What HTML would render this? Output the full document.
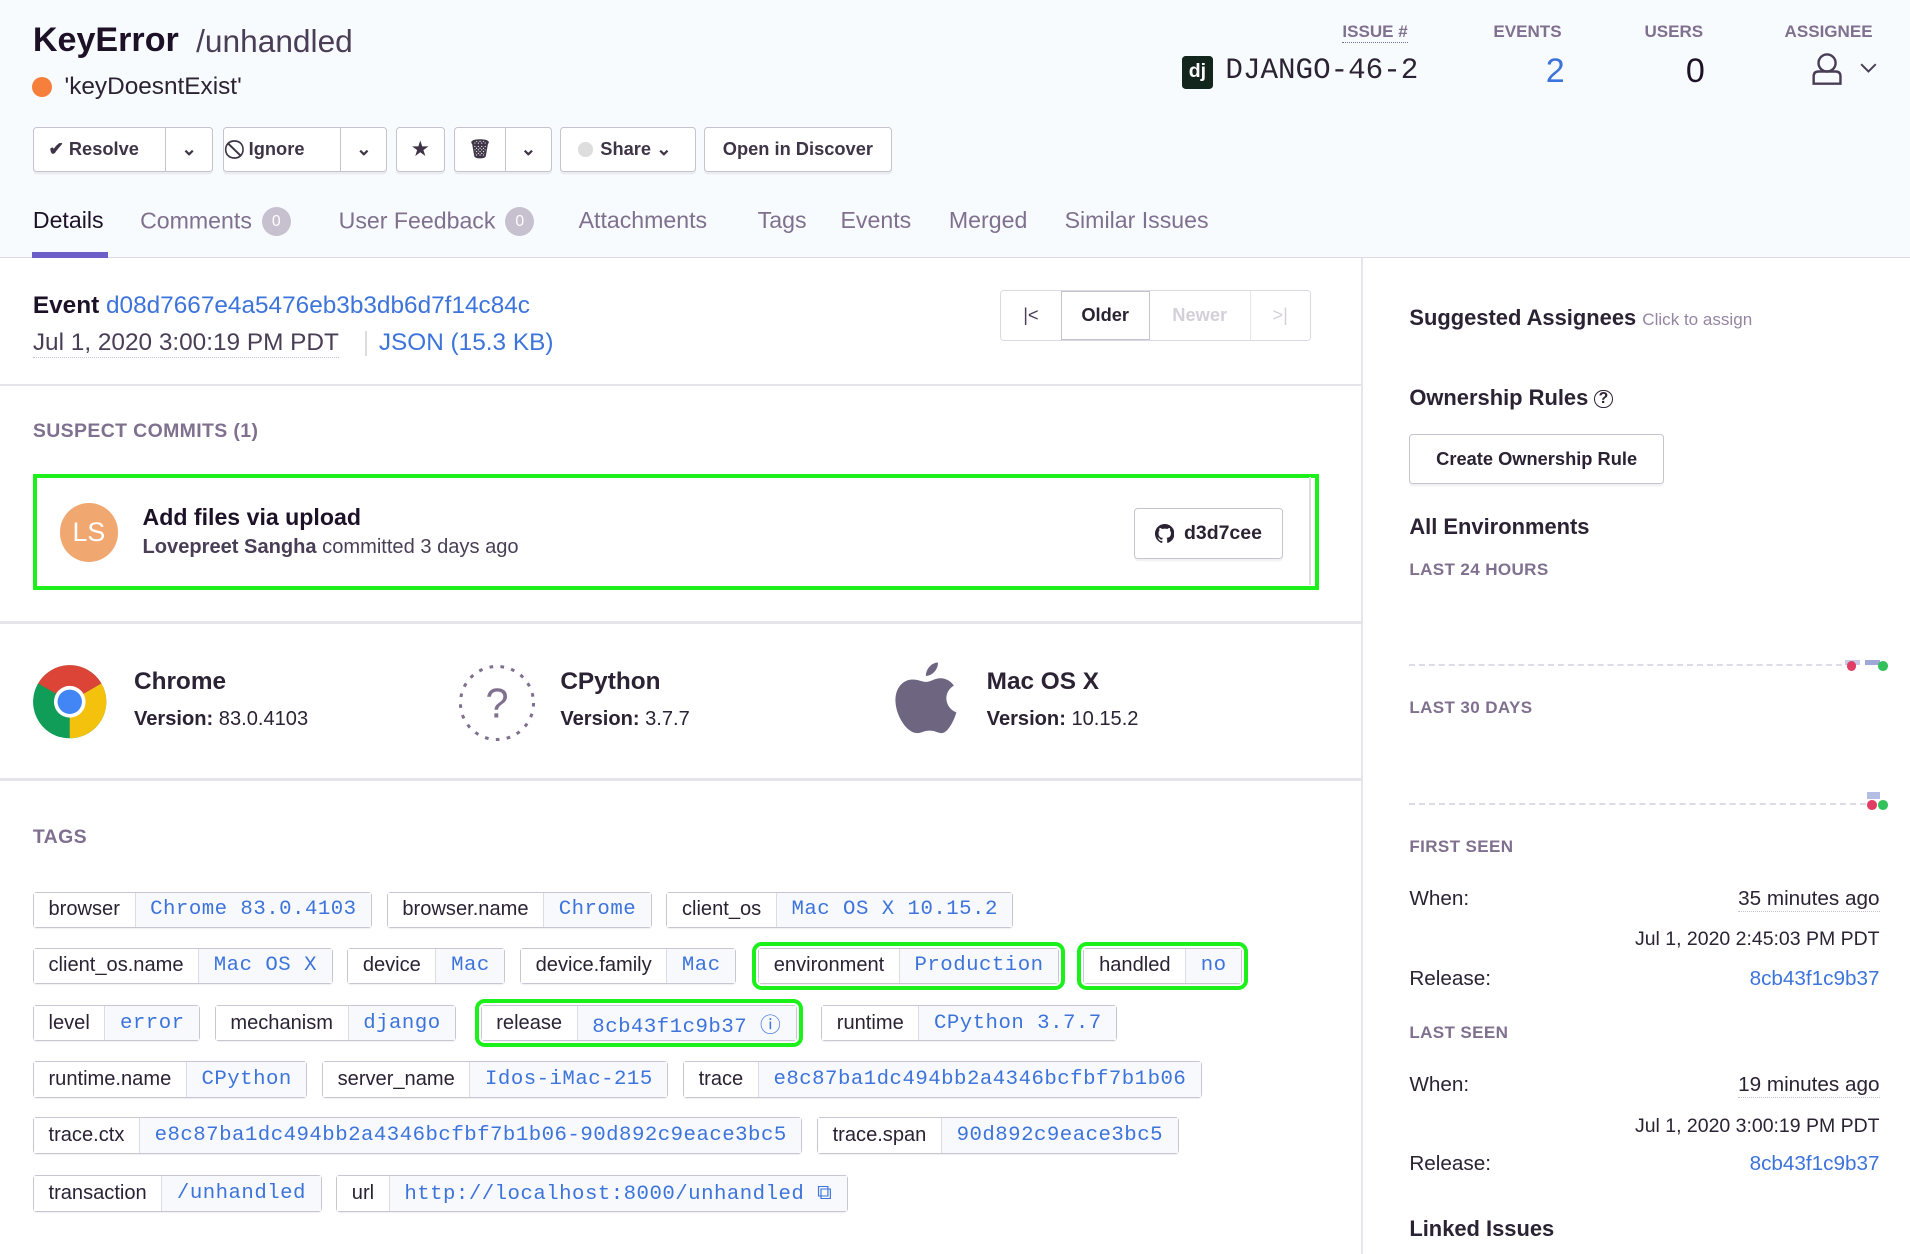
<!DOCTYPE html>
<html><head><meta charset="utf-8"><style>
*{box-sizing:border-box;margin:0;padding:0}
html,body{width:1910px;height:1254px;overflow:hidden;background:#fff}
#z{zoom:1.21811;width:1568px;height:1030px;position:relative;font-family:"Liberation Sans",sans-serif;color:#2b2233}
.a{position:absolute;white-space:nowrap}
.hdr{position:absolute;left:0;top:0;width:1568px;height:212px;background:#f8fbfd;border-bottom:1px solid #dcdbe3}
.btn{position:absolute;top:104px;height:37px;border:1px solid #c6c2cf;border-radius:3px;background:#fff;box-shadow:0 2px 0 rgba(0,0,0,.06);font-size:15px;font-weight:bold;color:#3e3446;display:flex;align-items:center}
.btn .s{border-left:1px solid #c6c2cf;height:100%;display:flex;align-items:center;justify-content:center}
.tab{position:absolute;top:170px;font-size:19px;color:#80708f}
.badge{display:inline-block;width:24px;height:24px;border-radius:12px;background:#c6c0cf;color:#fff;font-size:13px;text-align:center;line-height:24px;vertical-align:2px;margin-left:8px}
.lbl{position:absolute;font-size:14px;font-weight:bold;color:#80708f;letter-spacing:.3px}
.hr{position:absolute;left:0;width:1117px;height:2px;background:#e7e5ec}
.row{position:absolute;left:27px;display:flex;gap:0}
.tag{display:inline-flex;height:30px;border:1px solid #c9c5d2;border-radius:3px;box-shadow:0 1px 0 rgba(0,0,0,.05);font-size:16.5px;margin-right:12px;align-items:stretch}
.tag .k{padding:0 12px;display:flex;align-items:center;color:#2b2233;background:#fff}
.tag .v{padding:0 12px;display:flex;align-items:center;border-left:1px solid #dedbe4;background:#f7f9fc;color:#3d74db;font-family:"Liberation Mono",monospace;font-size:17px;letter-spacing:.4px}
.hl{outline:4px solid #1bf01b;outline-offset:2px}
.sb{position:absolute;left:1157px;font-size:17px;color:#2b2233}
.rt{position:absolute;right:25px;font-size:17px}
</style></head><body><div id="z">
<div class="hdr"></div>
<div class="a" style="left:27px;top:17px;font-size:28px;font-weight:bold;color:#1d1127">KeyError</div>
<div class="a" style="left:161px;top:19px;font-size:26px;color:#4a3e56">/unhandled</div>
<div class="a" style="left:26px;top:63px;width:17px;height:17px;border-radius:50%;background:#f67f3b"></div>
<div class="a" style="left:53px;top:60px;font-size:20px;color:#2b2233">'keyDoesntExist'</div>

<div class="btn" style="left:27px;width:148px"><div style="width:108px;padding-left:12px">✔ Resolve</div><div class="s" style="width:39px">&#8964;</div></div>
<div class="btn" style="left:183px;width:135px"><div style="width:96px;padding-left:12px">⃠&nbsp; Ignore</div><div class="s" style="width:38px">&#8964;</div></div>
<div class="btn" style="left:325px;width:40px;justify-content:center">★</div>
<div class="btn" style="left:373px;width:80px"><div style="width:41px;text-align:center">🗑</div><div class="s" style="width:38px">&#8964;</div></div>
<div class="btn" style="left:460px;width:111px;padding-left:14px"><span style="display:inline-block;width:12px;height:12px;border-radius:6px;background:#ddd;margin-right:6px"></span>Share &#8964;</div>
<div class="btn" style="left:578px;width:154px;justify-content:center">Open in Discover</div>

<div class="tab" style="left:27px;color:#1d1127">Details</div>
<div class="a" style="left:26px;top:207px;width:63px;height:5px;background:#6c5fc7"></div>
<div class="tab" style="left:115px">Comments<span class="badge">0</span></div>
<div class="tab" style="left:278px">User Feedback<span class="badge">0</span></div>
<div class="tab" style="left:475px">Attachments</div>
<div class="tab" style="left:622px">Tags</div>
<div class="tab" style="left:690px">Events</div>
<div class="tab" style="left:779px">Merged</div>
<div class="tab" style="left:874px">Similar Issues</div>

<div class="a" style="left:1102px;top:18px;font-size:14px;font-weight:bold;color:#80708f;border-bottom:1px dotted #80708f">ISSUE #</div>
<div class="a" style="left:970px;top:46px;width:26px;height:27px;border-radius:3px;color:#fff;font-weight:bold;font-size:16px;text-align:center;line-height:26px;background:#12261e">dj</div>
<div class="a" style="left:1006px;top:44px;font-size:24px;font-family:'Liberation Mono',monospace;color:#2b2233">DJANGO-46-2</div>
<div class="a" style="left:1226px;top:18px;font-size:14px;font-weight:bold;color:#80708f">EVENTS</div>
<div class="a" style="left:1269px;top:43px;font-size:28px;color:#3d74db">2</div>
<div class="a" style="left:1350px;top:18px;font-size:14px;font-weight:bold;color:#80708f">USERS</div>
<div class="a" style="left:1384px;top:43px;font-size:28px;color:#1d1127">0</div>
<div class="a" style="left:1465px;top:18px;font-size:14px;font-weight:bold;color:#80708f">ASSIGNEE</div>
<svg class="a" style="left:1486px;top:43px" width="60" height="28" viewBox="0 0 60 28"><circle cx="14" cy="9" r="7" fill="none" stroke="#4a3e56" stroke-width="2"/><path d="M3 26v-6q0-4 4-4h14q4 0 4 4v6z" fill="none" stroke="#4a3e56" stroke-width="2"/><path d="M42 10l6 6 6-6" fill="none" stroke="#4a3e56" stroke-width="1.6"/></svg>

<div class="a" style="left:1117px;top:212px;width:2px;height:818px;background:#e7e5ec"></div>
<div class="a" style="left:27px;top:240px;font-size:20px;font-weight:bold;color:#1d1127">Event <span style="font-weight:normal;color:#3d74db">d08d7667e4a5476eb3b3db6d7f14c84c</span></div>
<div class="a" style="left:27px;top:270px;font-size:20px;color:#4a3e56;border-bottom:1px dotted #c6c0cf">Jul 1, 2020 3:00:19 PM PDT</div>
<div class="a" style="left:300px;top:272px;width:1px;height:20px;background:#ddd"></div>
<div class="a" style="left:311px;top:270px;font-size:20px;color:#3d74db">JSON (15.3 KB)</div>
<div class="a" style="left:821px;top:238px;width:255px;height:42px;border:1px solid #dcd9e2;border-radius:3px;display:flex;font-size:15px;font-weight:bold">
<div style="width:49px;display:flex;align-items:center;justify-content:center;font-weight:normal;color:#4a3e56">|&lt;</div>
<div style="width:73px;border:1px solid #c6c2cf;display:flex;align-items:center;justify-content:center;color:#2b2233">Older</div>
<div style="width:83px;border-right:1px solid #e7e5ec;display:flex;align-items:center;justify-content:center;color:#d3d0da">Newer</div>
<div style="flex:1;display:flex;align-items:center;justify-content:center;color:#d3d0da;font-weight:normal">&gt;|</div></div>
<div class="hr" style="top:315px"></div>

<div class="lbl" style="left:27px;top:345px;font-size:16px">SUSPECT COMMITS (1)</div>
<div class="a" style="left:27px;top:389px;width:1056px;height:95px;border:4px solid #1bf01b"></div>
<div class="a" style="left:1075px;top:392px;width:1px;height:88px;background:#ddd"></div>
<div class="a" style="left:49px;top:413px;width:48px;height:48px;border-radius:50%;background:#f0a870;color:#fff;font-size:22px;text-align:center;line-height:48px">LS</div>
<div class="a" style="left:117px;top:414px;font-size:19px;font-weight:bold;color:#1d1127">Add files via upload</div>
<div class="a" style="left:117px;top:440px;font-size:16.5px;color:#4a3e56"><b>Lovepreet Sangha</b> committed 3 days ago</div>
<div class="a" style="left:931px;top:417px;width:122px;height:42px;border:1px solid #c6c2cf;border-radius:3px;box-shadow:0 2px 0 rgba(0,0,0,.05);display:flex;align-items:center;justify-content:center;font-size:16px;font-weight:bold;color:#2b2233">
<svg width="16" height="16" viewBox="0 0 16 16" style="margin-right:8px"><path fill="#2b2233" d="M8 0C3.6 0 0 3.6 0 8c0 3.5 2.3 6.5 5.5 7.6.4.1.5-.2.5-.4v-1.4c-2.200.5-2.700-1-2.700-1-.4-.9-.9-1.200-.9-1.200-.7-.5.1-.5.1-.5.8.1 1.200.8 1.200.8.7 1.200 1.900.9 2.300.7.1-.5.3-.9.5-1.100-1.800-.2-3.600-.9-3.600-4 0-.9.3-1.600.8-2.100-.1-.2-.4-1 .1-2.100 0 0 .7-.2 2.200.8.6-.2 1.300-.3 2-.3s1.400.1 2 .3c1.500-1 2.200-.8 2.200-.8.4 1.100.2 1.900.1 2.100.5.6.8 1.300.8 2.100 0 3.100-1.900 3.700-3.600 3.900.3.3.5.8.5 1.500v2.200c0 .2.1.5.6.4C13.700 14.500 16 11.500 16 8c0-4.400-3.600-8-8-8z"/></svg>d3d7cee</div>
<div class="hr" style="top:510px"></div>

<svg class="a" style="left:26px;top:545px" width="62" height="62" viewBox="0 0 62 62"><circle cx="31" cy="31" r="30" fill="#0f9d58"/><path d="M31 31L5 16A30 30 0 0 1 57 16Z" fill="#db4437"/><path d="M31 31L57 16A30 30 0 0 1 31 61Z" fill="#f4c20d"/><path d="M31 31 5 16A30 30 0 0 0 23 60Z" fill="#0f9d58"/><circle cx="31" cy="31" r="13" fill="#fff"/><circle cx="31" cy="31" r="10" fill="#4285f4"/></svg>
<div class="a" style="left:110px;top:548px;font-size:20px;font-weight:bold;color:#2b2233">Chrome</div>
<div class="a" style="left:110px;top:581px;font-size:16.5px;color:#2b2233"><b>Version:</b> 83.0.4103</div>
<svg class="a" style="left:376px;top:545px" width="64" height="64" viewBox="0 0 64 64"><circle cx="32" cy="32" r="30" fill="none" stroke="#80708f" stroke-width="2.5" stroke-dasharray="3 6"/><text x="32" y="44" text-anchor="middle" font-size="34" fill="#80708f" font-family="Liberation Sans">?</text></svg>
<div class="a" style="left:460px;top:548px;font-size:20px;font-weight:bold;color:#2b2233">CPython</div>
<div class="a" style="left:460px;top:581px;font-size:16.5px;color:#2b2233"><b>Version:</b> 3.7.7</div>
<svg class="a" style="left:733px;top:542px" width="54" height="66" viewBox="0 0 54 66"><path fill="#6e6580" d="M37 2c0 6-5 11-10 11 0-6 5-11 10-11zM27 18c4 0 7-3 12-3 5 0 9 3 11 6-9 5-8 18 2 22-2 7-7 17-12 17-4 0-5-2-10-2s-6 2-10 2C11 60 2 45 2 33 2 22 9 16 16 16c5 0 8 2 11 2z"/></svg>
<div class="a" style="left:810px;top:548px;font-size:20px;font-weight:bold;color:#2b2233">Mac OS X</div>
<div class="a" style="left:810px;top:581px;font-size:16.5px;color:#2b2233"><b>Version:</b> 10.15.2</div>
<div class="hr" style="top:639px"></div>

<div class="lbl" style="left:27px;top:678px;font-size:16px">TAGS</div>
<div class="row" style="top:732px"><span class="tag"><span class="k">browser</span><span class="v">Chrome 83.0.4103</span></span><span class="tag"><span class="k">browser.name</span><span class="v">Chrome</span></span><span class="tag"><span class="k">client_os</span><span class="v">Mac OS X 10.15.2</span></span></div>
<div class="row" style="top:778px"><span class="tag"><span class="k">client_os.name</span><span class="v">Mac OS X</span></span><span class="tag"><span class="k">device</span><span class="v">Mac</span></span><span class="tag" style="margin-right:18px"><span class="k">device.family</span><span class="v">Mac</span></span><span class="tag hl" style="margin-right:20px"><span class="k">environment</span><span class="v">Production</span></span><span class="tag hl"><span class="k">handled</span><span class="v">no</span></span></div>
<div class="row" style="top:825px"><span class="tag"><span class="k">level</span><span class="v">error</span></span><span class="tag" style="margin-right:20px"><span class="k">mechanism</span><span class="v">django</span></span><span class="tag hl" style="margin-right:20px"><span class="k">release</span><span class="v">8cb43f1c9b37 ⓘ</span></span><span class="tag"><span class="k">runtime</span><span class="v">CPython 3.7.7</span></span></div>
<div class="row" style="top:871px"><span class="tag"><span class="k">runtime.name</span><span class="v">CPython</span></span><span class="tag"><span class="k">server_name</span><span class="v">Idos-iMac-215</span></span><span class="tag"><span class="k">trace</span><span class="v">e8c87ba1dc494bb2a4346bcfbf7b1b06</span></span></div>
<div class="row" style="top:917px"><span class="tag"><span class="k">trace.ctx</span><span class="v">e8c87ba1dc494bb2a4346bcfbf7b1b06-90d892c9eace3bc5</span></span><span class="tag"><span class="k">trace.span</span><span class="v">90d892c9eace3bc5</span></span></div>
<div class="row" style="top:965px"><span class="tag"><span class="k">transaction</span><span class="v">/unhandled</span></span><span class="tag"><span class="k">url</span><span class="v">http://localhost:8000/unhandled ⧉</span></span></div>

<div class="sb" style="top:250px;font-weight:bold;font-size:18px">Suggested Assignees <span style="font-weight:normal;font-size:14px;color:#9585a3">Click to assign</span></div>
<div class="sb" style="top:316px;font-weight:bold;font-size:18px">Ownership Rules <span style="font-size:13px;display:inline-block;width:15px;height:15px;border:1.5px solid #2b2233;border-radius:50%;text-align:center;line-height:13px;vertical-align:2px">?</span></div>
<div class="a" style="left:1157px;top:356px;width:209px;height:41px;border:1px solid #c6c2cf;border-radius:3px;box-shadow:0 2px 0 rgba(0,0,0,.05);font-size:15px;font-weight:bold;display:flex;align-items:center;justify-content:center">Create Ownership Rule</div>
<div class="sb" style="top:422px;font-weight:bold;font-size:18px">All Environments</div>
<div class="lbl" style="left:1157px;top:460px">LAST 24 HOURS</div>
<div class="a" style="left:1157px;top:545px;width:355px;border-top:2px dashed #dcdbe6"></div>
<div class="a" style="left:1515px;top:542px;width:12px;height:4px;background:#c7cbe8"></div><div class="a" style="left:1531px;top:542px;width:12px;height:4px;background:#9fa9d8"></div>
<div class="a" style="left:1516px;top:543px;width:8px;height:8px;border-radius:50%;background:#e03e64"></div><div class="a" style="left:1542px;top:543px;width:8px;height:8px;border-radius:50%;background:#33c15b"></div>
<div class="lbl" style="left:1157px;top:573px">LAST 30 DAYS</div>
<div class="a" style="left:1157px;top:659px;width:375px;border-top:2px dashed #dcdbe6"></div>
<div class="a" style="left:1533px;top:650px;width:10px;height:6px;background:#b4bde4"></div>
<div class="a" style="left:1533px;top:657px;width:8px;height:8px;border-radius:50%;background:#e03e64"></div><div class="a" style="left:1542px;top:657px;width:8px;height:8px;border-radius:50%;background:#33c15b"></div>
<div class="lbl" style="left:1157px;top:687px">FIRST SEEN</div>
<div class="sb" style="top:728px">When:</div>
<div class="rt" style="top:728px;border-bottom:1px dotted #c6c0cf">35 minutes ago</div>
<div class="rt" style="top:762px;font-size:16px">Jul 1, 2020 2:45:03 PM PDT</div>
<div class="sb" style="top:794px">Release:</div>
<div class="rt" style="top:794px;color:#3d74db">8cb43f1c9b37</div>
<div class="lbl" style="left:1157px;top:840px">LAST SEEN</div>
<div class="sb" style="top:881px">When:</div>
<div class="rt" style="top:881px;border-bottom:1px dotted #c6c0cf">19 minutes ago</div>
<div class="rt" style="top:915px;font-size:16px">Jul 1, 2020 3:00:19 PM PDT</div>
<div class="sb" style="top:946px">Release:</div>
<div class="rt" style="top:946px;color:#3d74db">8cb43f1c9b37</div>
<div class="sb" style="top:998px;font-weight:bold;font-size:18px">Linked Issues</div>
</div></body></html>
